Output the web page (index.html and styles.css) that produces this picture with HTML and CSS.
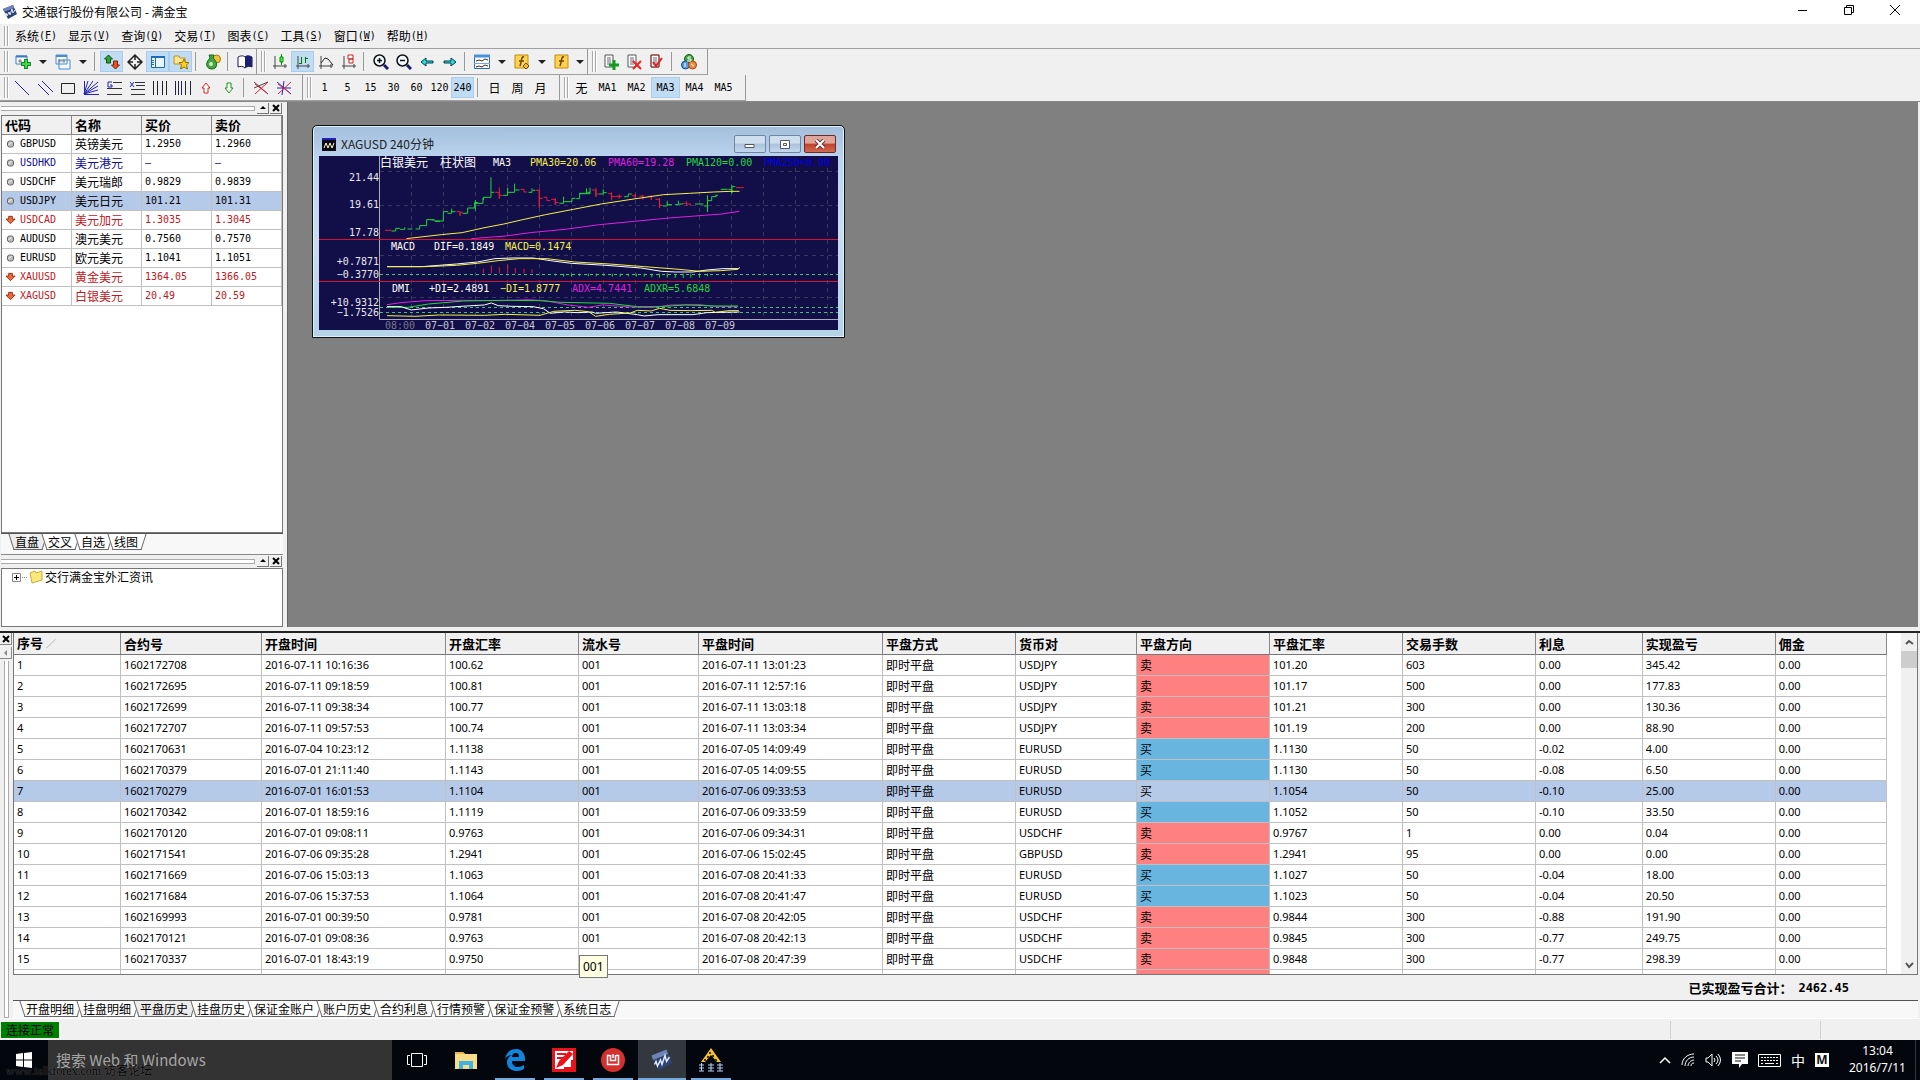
FILE: index.html
```html
<!DOCTYPE html>
<html lang="zh-CN">
<head>
<meta charset="utf-8">
<title>交通银行股份有限公司 - 满金宝</title>
<link rel="stylesheet" href="styles.css">
</head>
<body>
<svg class="defs" width="0" height="0" aria-hidden="true">
  <symbol id="app" viewBox="0 0 16 16"><path d="M1 5l10-4 4 9-9 5z" fill="#2c4273"/><path d="M1 5l10-4 1 3-10 4z" fill="#6e84b4"/><path d="M3 11l1-2 1 3 2-4 1 3 2-6 1 4 2-3" fill="none" stroke="#dfe8fa"/></symbol>
  <symbol id="dot" viewBox="0 0 8 8"><rect x="1" y="1" width="6" height="6" rx="2" fill="#bbb" stroke="#666"/><path d="M2 5l3-3" stroke="#fff"/></symbol>
  <symbol id="fall" viewBox="0 0 12 10"><path d="M4 1h4v3h3L6 9 1 4h3z" fill="#f26a35" stroke="#8c2a10"/></symbol>
  <symbol id="axes" viewBox="0 0 16 16"><path d="M3 2v13M1 12h14M13 10v4" fill="none" stroke="#444"/></symbol>
  <symbol id="page" viewBox="0 0 16 16"><path d="M2 1h8v12H2z" fill="#fff" stroke="#555"/><path d="M4 4h4M4 6h4M4 8h4M4 10h4" stroke="#667"/></symbol>
  <symbol id="func" viewBox="0 0 16 16"><path d="M1 1h13v13H1z" fill="#ffd34d" stroke="#c08a10"/><path d="M10 3c-3-1-2 4-4 9M5 7h5" fill="none" stroke="#70460c" stroke-width="1.5"/></symbol>
</svg>

<header class="titlebar">
  <svg width="16" height="16"><use href="#app"/></svg>
  <h1>交通银行股份有限公司 - 满金宝</h1>
  <div class="winctl">
    <button aria-label="最小化"><svg width="10" height="10"><path d="M0 5.500h9" stroke="#000"/></svg></button>
    <button aria-label="还原"><svg width="10" height="10" fill="none" stroke="#000"><path d="M.5 2.500h7v7h-7zM2.500 2V.5h7v7H8"/></svg></button>
    <button aria-label="关闭"><svg width="10" height="10" stroke="#000"><path d="M0 0l10 10M10 0L0 10"/></svg></button>
  </div>
</header>

<nav class="menubar">
  <i class="grip"></i>
  <button>系统<span>(<u>F</u>)</span></button><button>显示<span>(<u>V</u>)</span></button><button>查询<span>(<u>Q</u>)</span></button><button>交易<span>(<u>T</u>)</span></button><button>图表<span>(<u>C</u>)</span></button><button>工具<span>(<u>S</u>)</span></button><button>窗口<span>(<u>W</u>)</span></button><button>帮助<span>(<u>H</u>)</span></button>
</nav>

<div class="toolrow">
  <div class="toolbar">
    <i class="grip"></i>
    <button aria-label="新建图表"><svg viewBox="0 0 16 16"><path d="M1 2h11v8H1z" fill="#fff" stroke="#3c78c8"/><path d="M1 2.500h11" stroke="#3c78c8" stroke-width="2"/><path d="M3 7h4M5 5v4" stroke="#678"/><path d="M11 5v10M6 10h10" stroke="#128a20" stroke-width="4"/><path d="M11 6v8M7 10h8" stroke="#43d84b" stroke-width="2"/></svg></button>
    <button class="drop" aria-label="更多"></button>
    <button aria-label="窗口"><svg viewBox="0 0 16 16"><path d="M4 6h11v9H4zM1 1h11v9H1z" fill="#f2f9ff" stroke="#4d8bd0"/><path d="M1 2h11" stroke="#4d8bd0" stroke-width="2"/><path d="M3 7h7M4 5v4M9 5v4" stroke="#789"/></svg></button>
    <button class="drop" aria-label="更多"></button>
    <i class="sep"></i>
    <button class="on" aria-label="报价"><svg viewBox="0 0 16 16"><path d="M4.500 1l4 4h-2v4h-4V5h-2z" fill="#27a530" stroke="#0c5012"/><path d="M9.500 7h4v4h2l-4 4-4-4h2z" fill="#e8521f" stroke="#7c200b"/></svg></button>
    <button aria-label="十字光标"><svg viewBox="0 0 16 16" fill="none" stroke="#222"><path d="M8 1v5M8 10v5M1 8h5M10 8h5M8 1l7 7-7 7-7-7z" stroke-width="1.500"/></svg></button>
    <button class="on" aria-label="数据窗口"><svg viewBox="0 0 16 16"><path d="M1.500 2.500h13v11h-13z" fill="#eaf6ff" stroke="#1c69b5"/><path d="M1 3h14" stroke="#1c69b5" stroke-width="2"/><path d="M5.500 4v9M2 6.500h2M2 8.500h2M2 10.500h2" stroke="#1c69b5"/></svg></button>
    <button class="on" aria-label="收藏夹"><svg viewBox="0 0 16 16"><path d="M1 2h5l1 2h5v6H1z" fill="#ffe591" stroke="#b89225"/><path d="M11 5l1.500 3.500H16l-2.500 2.500 1 4-3.500-2-3.500 2 1-4L6 8.500h3.500z" fill="#ffd21f" stroke="#997200"/></svg></button>
    <i class="sep"></i>
    <button aria-label="交易"><svg viewBox="0 0 16 16"><circle cx="11.500" cy="5" r="4" fill="#f1c62c" stroke="#a87808"/><path d="M4 1h5L8 4c6 5 4 11-1 11S-1 10 5 4z" fill="#44a544" stroke="#1c681f"/><circle cx="6" cy="10" r="2" fill="#c9efbb"/></svg></button>
    <i class="sep"></i>
    <button aria-label="帮助"><svg viewBox="0 0 16 16"><path d="M8 3C6 1 3 2 1 3v10c2-1 5-1 7 1 2-2 5-2 7-1V3c-2-1-5-2-7 0z" fill="#fff" stroke="#14144b"/><path d="M8 3c2-2 5-1 7 0v10c-2-1-5-1-7 1z" fill="#1b2070"/></svg></button>
  </div>
  <div class="toolbar">
    <i class="grip"></i>
    <button aria-label="蜡烛图"><svg viewBox="0 0 16 16"><use href="#axes"/><path d="M9.500 0v11" stroke="#090"/><path d="M8 3h3v5H8z" fill="#5d5" stroke="#090"/></svg></button>
    <button class="on" aria-label="柱状图"><svg viewBox="0 0 16 16"><use href="#axes"/><path d="M6.500 3v7M4 9.500h2M10.500 3v6M11 4.500h2" stroke="#070" fill="none"/></svg></button>
    <button aria-label="线图"><svg viewBox="0 0 16 16"><use href="#axes"/><path d="M3 9l4-5 3 1 5 6" stroke="#222" fill="none"/></svg></button>
    <button aria-label="宝塔图"><svg viewBox="0 0 16 16"><use href="#axes"/><path d="M7 1h5v4H7zM8 5h4v4H8z" fill="#fff" stroke="#c22"/></svg></button>
    <i class="sep"></i>
    <button aria-label="放大"><svg viewBox="0 0 16 16"><circle cx="6.500" cy="6.500" r="5.500" fill="#eff9ff" stroke="#111" stroke-width="1.500"/><path d="M4 6.500h5M6.500 4v5" stroke="#111" stroke-width="1.500"/><path d="M11 11l4 4" stroke="#191970" stroke-width="3"/></svg></button>
    <button aria-label="缩小"><svg viewBox="0 0 16 16"><circle cx="6.500" cy="6.500" r="5.500" fill="#eff9ff" stroke="#111" stroke-width="1.500"/><path d="M4 6.500h5" stroke="#111" stroke-width="1.500"/><path d="M11 11l4 4" stroke="#191970" stroke-width="3"/></svg></button>
    <button aria-label="左移"><svg viewBox="0 0 16 16"><path d="M2 8l5-4v3h7v2H7v3z" fill="#24dfe6" stroke="#033c46"/></svg></button>
    <button aria-label="右移"><svg viewBox="0 0 16 16"><path d="M14 8L9 4v3H2v2h7v3z" fill="#24dfe6" stroke="#033c46"/></svg></button>
    <i class="sep"></i>
    <button aria-label="模板"><svg viewBox="0 0 16 16"><path d="M.5 1.500h15v13H.5z" fill="#fff" stroke="#2b6db5"/><path d="M0 2h16" stroke="#478edb" stroke-width="3"/><path d="M0 9.500h16" stroke="#7aa7da"/><path d="M2 7l3-1 3 1 3-2 3 1M2 13l3-1 3 1 3-2 3 1" fill="none" stroke="#333"/></svg></button>
    <button class="drop" aria-label="更多"></button>
    <button aria-label="指标"><svg viewBox="0 0 16 16"><use href="#func"/><path d="M12 9l3 3-3 3-3-3z" fill="#f6bd2a" stroke="#6b4a00"/></svg></button>
    <button class="drop" aria-label="更多"></button>
    <button aria-label="公式"><svg viewBox="0 0 16 16"><use href="#func"/></svg></button>
    <button class="drop last" aria-label="更多"></button>
  </div>
  <div class="toolbar">
    <i class="grip"></i>
    <button aria-label="新建单"><svg viewBox="0 0 16 16"><use href="#page"/><path d="M11 6v10M6 11h10" stroke="#119c20" stroke-width="3"/></svg></button>
    <button aria-label="撤单"><svg viewBox="0 0 16 16"><use href="#page"/><path d="M7 7l8 8M15 7l-8 8" stroke="#e22" stroke-width="2"/></svg></button>
    <button aria-label="确认"><svg viewBox="0 0 16 16"><use href="#page"/><path d="M2 13V1h8v12z" fill="none" stroke="#a33"/><path d="M4 8l3 4 6-8" fill="none" stroke="#d22" stroke-width="2"/></svg></button>
    <i class="sep"></i>
    <button aria-label="资金"><svg viewBox="0 0 16 16"><circle cx="8" cy="5" r="4.500" fill="#3ba33b" stroke="#185c18"/><circle cx="4.500" cy="11" r="4" fill="#5898e0" stroke="#194b90"/><circle cx="11.500" cy="11" r="4" fill="#f08b3d" stroke="#9a4510"/><path d="M10 3H7v2h3v2H6M4 9v4M10 10l3 2" stroke="#fff" fill="none"/></svg></button>
    <i class="gap"></i>
  </div>
</div>

<div class="toolrow second">
  <div class="toolbar">
    <i class="grip"></i>
    <button aria-label="直线"><svg viewBox="0 0 16 16"><path d="M1 1l14 14" stroke="#22b"/></svg></button>
    <button aria-label="平行线"><svg viewBox="0 0 16 16"><path d="M1 4l11 11M5 1l11 11" stroke="#22b"/></svg></button>
    <button aria-label="矩形"><svg viewBox="0 0 16 16"><path d="M1.500 3.500h13v10h-13z" fill="none" stroke="#222"/></svg></button>
    <button aria-label="扇形线"><svg viewBox="0 0 16 16"><path d="M1.500 1v14M1 14.500h15M1 14L5 1M1 14L10 1M1 14L15 2M1 14l14-8M1 14l14-4" stroke="#22b" fill="none"/></svg></button>
    <button aria-label="黄金分割"><svg viewBox="0 0 16 16"><path d="M7 2.500h9M1 8.500h15M1 14.500h15" stroke="#333"/><path d="M6 2H2v5h4V5H4" fill="none" stroke="#22b"/></svg></button>
    <button aria-label="百分比线"><svg viewBox="0 0 16 16"><path d="M6 2.500h10M7 5.500h9M2 9.500h14M2 14.500h14" stroke="#333"/><path d="M1 2l4 5M5 2L1 7" fill="none" stroke="#22b"/></svg></button>
    <button aria-label="周期线"><svg viewBox="0 0 16 16"><path d="M1.500 1v14M5.500 1v14M10.500 1v14M14.500 1v14" stroke="#222"/></svg></button>
    <button aria-label="斐波那契线"><svg viewBox="0 0 16 16"><path d="M.5 1v14M3.500 1v14M6.500 1v14M10.500 1v14M15.500 1v14" stroke="#224"/></svg></button>
    <button aria-label="上箭头"><svg viewBox="0 0 16 16"><path d="M8 3l4 5h-2v5H6V8H4z" fill="#fff" stroke="#d22"/></svg></button>
    <button aria-label="下箭头"><svg viewBox="0 0 16 16"><path d="M8 13L4 8h2V3h4v5h2z" fill="#fff" stroke="#191"/></svg></button>
    <i class="sep"></i>
    <button aria-label="删除"><svg viewBox="0 0 16 16"><path d="M1 2l14 12M1 8l14-6" stroke="#444"/><path d="M15 2L2 14M2 4l12 9" stroke="#d24"/></svg></button>
    <button aria-label="全部删除"><svg viewBox="0 0 16 16"><path d="M1 2l14 12M1 8h14M8 1L6 15" stroke="#22b"/><path d="M15 2L2 14M2 4l12 9" stroke="#d24"/></svg></button>
    <i class="gap"></i>
  </div>
  <div class="toolbar mono">
    <i class="grip"></i>
    <button>1</button><button>5</button><button>15</button><button>30</button><button>60</button><button>120</button><button class="on">240</button>
    <i class="sep"></i>
    <button class="zh">日</button><button class="zh">周</button><button class="zh">月</button>
    <i class="gap"></i>
  </div>
  <div class="toolbar mono">
    <i class="grip"></i>
    <button class="zh">无</button><button class="ma">MA1</button><button class="ma">MA2</button><button class="ma on">MA3</button><button class="ma">MA4</button><button class="ma">MA5</button>
    <i class="gap"></i>
  </div>
</div>

<main class="workspace">
  <aside class="side">
    <section class="quotes">
      <div class="dockbar"><i></i><button aria-label="折叠"><svg width="8" height="8"><path d="M1 5h6L4 2z"/></svg></button><button aria-label="关闭"><svg width="8" height="8"><path d="M1 1l6 6M7 1L1 7" stroke="#000" stroke-width="2"/></svg></button></div>
      <div class="quotebox">
        <table>
          <tr><th>代码</th><th>名称</th><th>买价</th><th>卖价</th></tr>
          <tr><td><svg><use href="#dot"/></svg>GBPUSD</td><td>英镑美元</td><td>1.2950</td><td>1.2960</td></tr>
          <tr class="blue"><td><svg><use href="#dot"/></svg>USDHKD</td><td>美元港元</td><td>–</td><td>–</td></tr>
          <tr><td><svg><use href="#dot"/></svg>USDCHF</td><td>美元瑞郎</td><td>0.9829</td><td>0.9839</td></tr>
          <tr class="sel"><td><svg><use href="#dot"/></svg>USDJPY</td><td>美元日元</td><td>101.21</td><td>101.31</td></tr>
          <tr class="red"><td><svg class="big"><use href="#fall"/></svg>USDCAD</td><td>美元加元</td><td>1.3035</td><td>1.3045</td></tr>
          <tr><td><svg><use href="#dot"/></svg>AUDUSD</td><td>澳元美元</td><td>0.7560</td><td>0.7570</td></tr>
          <tr><td><svg><use href="#dot"/></svg>EURUSD</td><td>欧元美元</td><td>1.1041</td><td>1.1051</td></tr>
          <tr class="red"><td><svg class="big"><use href="#fall"/></svg>XAUUSD</td><td>黄金美元</td><td>1364.05</td><td>1366.05</td></tr>
          <tr class="red"><td><svg class="big"><use href="#fall"/></svg>XAGUSD</td><td>白银美元</td><td>20.49</td><td>20.59</td></tr>
        </table>
      </div>
      <div class="tabs"><button class="cur">直盘</button><button>交叉</button><button>自选</button><button>线图</button></div>
    </section>
    <section class="news">
      <div class="dockbar"><i></i><button aria-label="折叠"><svg width="8" height="8"><path d="M1 5h6L4 2z"/></svg></button><button aria-label="关闭"><svg width="8" height="8"><path d="M1 1l6 6M7 1L1 7" stroke="#000" stroke-width="2"/></svg></button></div>
      <div class="tree">
        <svg width="32" height="16"><path d="M.5 4.500h8v8h-8z" fill="#fff" stroke="#888"/><path d="M2 8.500h5M4.500 6v5" stroke="#000"/><path d="M10 8.500h6" stroke="#888" stroke-dasharray="1 1"/><path d="M18 4l5-2 1 2 6-2v9l-10 3z" fill="#fae87a" stroke="#c8ae3c"/></svg>
        <span>交行满金宝外汇资讯</span>
      </div>
    </section>
  </aside>

  <section class="mdi">
    <article class="chartwin">
      <header>
        <svg width="14" height="13"><path d="M0 0h14v13H0z" fill="#0a0a14"/><path d="M0 0h14v2H0z" fill="#22b"/><path d="M2 10l2-5 2 5 2-5 2 5 2-5" stroke="#ffc" fill="none"/></svg>
        <h2>XAGUSD 240分钟</h2>
        <button aria-label="最小化"><svg width="14" height="10"><path d="M2 5.500h9v3H2z" fill="#fff" stroke="#556"/></svg></button>
        <button aria-label="最大化"><svg width="14" height="10"><path d="M2.500 1.500h9v8h-9zM5.500 4.500h3v2h-3z" fill="#fff" stroke="#556"/></svg></button>
        <button class="close" aria-label="关闭"><svg width="14" height="10"><path d="M3 1l8 8M11 1L3 9" stroke="#633" stroke-width="4"/><path d="M3 1l8 8M11 1L3 9" stroke="#fff" stroke-width="2"/></svg></button>
      </header>
      <svg class="chart" viewBox="0 0 519 174" width="519" height="174">
        <g stroke="#38385c" stroke-dasharray="4 4" fill="none">
          <path d="M61 15.500h458M61 49.500h458M61 99.500h458M61 141.500h458"/>
          <path d="M92.500 12v150M124.500 12v150M156.500 12v150M188.500 12v150M220.500 12v150M252.500 12v150M284.500 12v150M316.500 12v150M348.500 12v150M380.500 12v150M412.500 12v150M444.500 12v150M476.500 12v150M508.500 12v150"/>
        </g>
        <path d="M61 118.500h458M61 151.500h458M61 156.500h458" stroke="#3fc56e" stroke-dasharray="3 3"/>
        <path d="M60.500 0v163.500H519" fill="none" stroke="#aab"/>
        <path d="M0 83.500h519M0 125.500h519" stroke="#d41430"/>
        <g class="plot" transform="translate(-14 -36) scale(.3476 .3333)">
          <path stroke="#1fd83a" d="M249 333h12v-8h12M273 328h14v-6M295 327h14M318 327h12v-10h20v-18h20M364 300h10v4h14M376 303h22v-28h14M410 280h12v-14M421 275h12M454 280h14v-16h20v-16h10M490 272v-32M490 250h22v-16M513 240v-8h22v-60M536 217h8M570 226h13v-22M583 217h20v-26M605 210h12M643 217h10v-12M655 211h8M732 250h12v-20M744 245h24v-10h10M780 236h10v-16h20v-15M790 221h30v-18M812 217h8M846 222h12v-14M858 218h10M918 230h12v-8h10M1030 258h12v-14M1042 254h14M1064 254h10v-12M1074 252h14M1122 252h24M1148 258h10v18v-50M1158 242h12v-12h14M1180 226h8M1196 208h20M1218 208h10v12v-24M1228 200h10"/>
          <path stroke="#e0203a" d="M230 331h18M436 275h10v12v-10h8M547 217h12v19v-34M559 226h10M620 208h10v8h8M664 211h10v52v-58M674 235h10M686 232h10v10h10M708 238h12v16v-20M720 248h10M825 210h12v20v-27M837 222h8M872 221h10v20v-24M882 230h10M892 229h12v6v-12M904 229h8M940 227h10v10v-16M962 228h10v10v-14M972 232h8M986 229h10v10v-14M1008 238h12v26v-30M1020 256h8M1088 250h10v6v-12M1100 252h10v6M1240 203h22"/>
          <path stroke="#f4f04a" d="M292 356l100-12 60-6 60-14 60-12 50-12 70-16 80-16 80-16 100-16 80-12 74-4 70-4 50-2h24"/>
          <path stroke="#df20df" d="M478 356l100-8 70-10 100-10 100-14 100-10 100-10 100-8 52-4 50-8"/>
          <path stroke="#fff" d="M236 440h100l50-4 50-4 60-6 50-10 50-2h60l50 8 60 8 100 6 100 8 60 10 40 2h50l40-6 46-4h46l2-4"/>
          <path stroke="#f4f04a" d="M236 440h110l90-4 60-6 60-8 60-6h80l80 10 100 6 100 8 100 8 60 6 60-2 50-4"/>
          <path stroke="#e0203a" d="M513 460v-14M536 460v-24M559 460v-18M583 460v-26M605 460v-16M630 460v-14M653 460v-12"/>
          <path stroke="#1fd83a" d="M720 461v6M744 461v9M767 461v9M790 461v7M815 461v8M838 461v8M860 461v7M884 461v9M907 461v9M930 461v8M953 461v9M976 461v9M998 461v11M1020 461v12M1042 461v12M1065 461v13M1088 461v13M1110 461v12M1135 461v12M1158 461v8"/>
          <path stroke="#df20df" d="M236 554l40-6 70-6 110-1 110 1 80-3 50 4 60 12 60 7 40-7 80 6 60 2 60-8 80-1 50 6h60"/>
          <path stroke="#1fd83a" d="M236 562h60l60-10 100-9 120-2 100 1 60 5 140 3 80 10h60l80-5 80 3h70"/>
          <path stroke="#fff" d="M236 560h40l30 10 50-6 50-2 60-4 50-3 20-6 20 8 40 2 60 1 30 6 20 14 40-4 40 2 40-2 10 4 60-4 60 8 20 4 40-4h100l40-6 94-2"/>
          <path stroke="#f4f04a" d="M236 587l80 2 70-4 130 1 60-3 100 3 40-12 60-3 40 4 20 14 40-6 60-4 20-8 40 2 24-8 30 6 60 1 60-1 10 6 40-5h28"/>
        </g>
        <g class="mono">
          <text class="zh" x="61" y="11" fill="#fff">白银美元</text><text class="zh" x="121" y="11" fill="#fff">柱状图</text>
          <text x="174" y="10" fill="#fff">MA3</text><text x="211" y="10" fill="#f4f04a">PMA30=20.06</text><text x="289" y="10" fill="#df20df">PMA60=19.28</text><text x="367" y="10" fill="#1fd83a">PMA120=0.00</text><text x="445" y="10" fill="#0000e8">PMA250=0.00</text>
          <g fill="#e8e8f0" text-anchor="end"><text x="60" y="25">21.44</text><text x="60" y="52">19.61</text><text x="60" y="80">17.78</text><text x="60" y="109">+0.7871</text><text x="60" y="122">−0.3770</text><text x="60" y="150">+10.9312</text><text x="60" y="160">−1.7526</text></g>
          <text x="72" y="94" fill="#fff">MACD</text><text x="115" y="94" fill="#fff">DIF=0.1849</text><text x="186" y="94" fill="#f4f04a">MACD=0.1474</text>
          <text x="73" y="136" fill="#fff">DMI</text><text x="110" y="136" fill="#fff">+DI=2.4891</text><text x="181" y="136" fill="#f4f04a">−DI=1.8777</text><text x="253" y="136" fill="#df20df">ADX=4.7441</text><text x="325" y="136" fill="#1fd83a">ADXR=5.6848</text>
          <text x="66" y="173" fill="#77778c">08:00</text>
          <g fill="#c8c8d4"><text x="106" y="173">07−01</text><text x="146" y="173">07−02</text><text x="186" y="173">07−04</text><text x="226" y="173">07−05</text><text x="266" y="173">07−06</text><text x="306" y="173">07−07</text><text x="346" y="173">07−08</text><text x="386" y="173">07−09</text></g>
        </g>
      </svg>
    </article>
  </section>
</main>

<section class="history">
  <div class="strip">
    <button aria-label="关闭"><svg width="8" height="8"><path d="M1 1l6 6M7 1L1 7" stroke="#000" stroke-width="2"/></svg></button>
    <button aria-label="折叠"><svg width="8" height="8"><path d="M5 1v6L2 4z" fill="#888"/></svg></button>
    <i></i>
  </div>
  <div class="pane">
    <div class="tablebox">
      <div class="clip">
      <table>
        <colgroup><col class="w107"><col class="w141"><col class="w184"><col class="w133"><col class="w120"><col class="w184"><col class="w133"><col class="w121"><col class="w133"><col class="w133"><col class="w133"><col class="w107"><col class="w133"><col class="w111"></colgroup>
        <thead><tr><th>序号 <small>∕</small></th><th>合约号</th><th>开盘时间</th><th>开盘汇率</th><th>流水号</th><th>平盘时间</th><th>平盘方式</th><th>货币对</th><th>平盘方向</th><th>平盘汇率</th><th>交易手数</th><th>利息</th><th>实现盈亏</th><th>佣金</th></tr></thead>
        <tbody>
        <tr><td>1</td><td>1602172708</td><td>2016-07-11 10:16:36</td><td>100.62</td><td>001</td><td>2016-07-11 13:01:23</td><td>即时平盘</td><td>USDJPY</td><td class="sell">卖</td><td>101.20</td><td>603</td><td>0.00</td><td>345.42</td><td>0.00</td></tr>
        <tr><td>2</td><td>1602172695</td><td>2016-07-11 09:18:59</td><td>100.81</td><td>001</td><td>2016-07-11 12:57:16</td><td>即时平盘</td><td>USDJPY</td><td class="sell">卖</td><td>101.17</td><td>500</td><td>0.00</td><td>177.83</td><td>0.00</td></tr>
        <tr><td>3</td><td>1602172699</td><td>2016-07-11 09:38:34</td><td>100.77</td><td>001</td><td>2016-07-11 13:03:18</td><td>即时平盘</td><td>USDJPY</td><td class="sell">卖</td><td>101.21</td><td>300</td><td>0.00</td><td>130.36</td><td>0.00</td></tr>
        <tr><td>4</td><td>1602172707</td><td>2016-07-11 09:57:53</td><td>100.74</td><td>001</td><td>2016-07-11 13:03:34</td><td>即时平盘</td><td>USDJPY</td><td class="sell">卖</td><td>101.19</td><td>200</td><td>0.00</td><td>88.90</td><td>0.00</td></tr>
        <tr><td>5</td><td>1602170631</td><td>2016-07-04 10:23:12</td><td>1.1138</td><td>001</td><td>2016-07-05 14:09:49</td><td>即时平盘</td><td>EURUSD</td><td class="buy">买</td><td>1.1130</td><td>50</td><td>-0.02</td><td>4.00</td><td>0.00</td></tr>
        <tr><td>6</td><td>1602170379</td><td>2016-07-01 21:11:40</td><td>1.1143</td><td>001</td><td>2016-07-05 14:09:55</td><td>即时平盘</td><td>EURUSD</td><td class="buy">买</td><td>1.1130</td><td>50</td><td>-0.08</td><td>6.50</td><td>0.00</td></tr>
        <tr class="sel"><td>7</td><td>1602170279</td><td>2016-07-01 16:01:53</td><td>1.1104</td><td>001</td><td>2016-07-06 09:33:53</td><td>即时平盘</td><td>EURUSD</td><td>买</td><td>1.1054</td><td>50</td><td>-0.10</td><td>25.00</td><td>0.00</td></tr>
        <tr><td>8</td><td>1602170342</td><td>2016-07-01 18:59:16</td><td>1.1119</td><td>001</td><td>2016-07-06 09:33:59</td><td>即时平盘</td><td>EURUSD</td><td class="buy">买</td><td>1.1052</td><td>50</td><td>-0.10</td><td>33.50</td><td>0.00</td></tr>
        <tr><td>9</td><td>1602170120</td><td>2016-07-01 09:08:11</td><td>0.9763</td><td>001</td><td>2016-07-06 09:34:31</td><td>即时平盘</td><td>USDCHF</td><td class="sell">卖</td><td>0.9767</td><td>1</td><td>0.00</td><td>0.04</td><td>0.00</td></tr>
        <tr><td>10</td><td>1602171541</td><td>2016-07-06 09:35:28</td><td>1.2941</td><td>001</td><td>2016-07-06 15:02:45</td><td>即时平盘</td><td>GBPUSD</td><td class="sell">卖</td><td>1.2941</td><td>95</td><td>0.00</td><td>0.00</td><td>0.00</td></tr>
        <tr><td>11</td><td>1602171669</td><td>2016-07-06 15:03:13</td><td>1.1063</td><td>001</td><td>2016-07-08 20:41:33</td><td>即时平盘</td><td>EURUSD</td><td class="buy">买</td><td>1.1027</td><td>50</td><td>-0.04</td><td>18.00</td><td>0.00</td></tr>
        <tr><td>12</td><td>1602171684</td><td>2016-07-06 15:37:53</td><td>1.1064</td><td>001</td><td>2016-07-08 20:41:47</td><td>即时平盘</td><td>EURUSD</td><td class="buy">买</td><td>1.1023</td><td>50</td><td>-0.04</td><td>20.50</td><td>0.00</td></tr>
        <tr><td>13</td><td>1602169993</td><td>2016-07-01 00:39:50</td><td>0.9781</td><td>001</td><td>2016-07-08 20:42:05</td><td>即时平盘</td><td>USDCHF</td><td class="sell">卖</td><td>0.9844</td><td>300</td><td>-0.88</td><td>191.90</td><td>0.00</td></tr>
        <tr><td>14</td><td>1602170121</td><td>2016-07-01 09:08:36</td><td>0.9763</td><td>001</td><td>2016-07-08 20:42:13</td><td>即时平盘</td><td>USDCHF</td><td class="sell">卖</td><td>0.9845</td><td>300</td><td>-0.77</td><td>249.75</td><td>0.00</td></tr>
        <tr><td>15</td><td>1602170337</td><td>2016-07-01 18:43:19</td><td>0.9750</td><td>001</td><td>2016-07-08 20:47:39</td><td>即时平盘</td><td>USDCHF</td><td class="sell">卖</td><td>0.9848</td><td>300</td><td>-0.77</td><td>298.39</td><td>0.00</td></tr>
        <tr><td></td><td></td><td></td><td></td><td></td><td></td><td></td><td></td><td class="sell"></td><td></td><td></td><td></td><td></td><td></td></tr>
        </tbody>
      </table>
      </div>
      <div class="scroll">
        <button aria-label="上"><svg width="9" height="7" fill="none" stroke="#555" stroke-width="2"><path d="M1 5l3-3 4 3"/></svg></button>
        <i></i>
        <button class="down" aria-label="下"><svg width="9" height="7" fill="none" stroke="#555" stroke-width="2"><path d="M1 1l3 4 4-4"/></svg></button>
      </div>
    </div>
    <div class="total"><span>已实现盈亏合计：</span><b class="mono">2462.45</b></div>
    <div class="tabs wide"><button>开盘明细</button><button>挂盘明细</button><button class="cur">平盘历史</button><button>挂盘历史</button><button>保证金账户</button><button>账户历史</button><button>合约利息</button><button>行情预警</button><button>保证金预警</button><button>系统日志</button></div>
  </div>
  <div class="tooltip" role="tooltip">001</div>
</section>

<footer class="status"><span>连接正常</span><i></i><i></i></footer>

<div class="taskbar">
  <button class="start" aria-label="开始"><svg width="16" height="16" fill="#fff"><path d="M0 2l7-1v6.500H0zM8 1l8-1v7.500H8zM0 8.500h7V15l-7-1zM8 8.500h8V16l-8-1z"/></svg></button>
  <input type="text" aria-label="搜索" placeholder="搜索 Web 和 Windows">
  <button aria-label="任务视图"><svg width="20" height="16" fill="none" stroke="#fff"><path d="M4.500 1.500h11v13h-11zM3 3.500H.5v9H3M17 3.500h2.500v9H17"/></svg></button>
  <button aria-label="文件资源管理器"><svg width="22" height="20"><path d="M0 2h8l2 2h12v15H0z" fill="#f9dc85"/><path d="M0 2h8l2 2h-10z" fill="#e8b94a"/><path d="M4 19v-8h14v8h-4v-4H8v4z" fill="#3fb3e4"/></svg></button>
  <button class="run" aria-label="Edge"><svg width="22" height="22" viewBox="0 0 22 22"><path d="M1 10C2 3 7 0 12 0c6 0 9 5 9 10v2H8c0 4 3 6 6 6 2 0 4-1 6-2v4c-2 1-4 2-7 2-6 0-10-3-10-9 0-3 2-6 5-7-5 0-7 4-7 4zm7-2h7c0-3-1-4-3-4-3 0-4 2-4 4z" fill="#1184dc"/></svg></button>
  <button class="run" aria-label="行情软件"><svg width="24" height="24"><path d="M0 0h24v24H0z" fill="#e8131b"/><path d="M3 3h18v18H3z" fill="#fff"/><path d="M5 6h9M5 10h6M20 12v8h-8" stroke="#e8131b" stroke-width="2" fill="none"/><path d="M4 20l3-7L17 3l4 3-10 11z" fill="#e8131b"/></svg></button>
  <button class="run" aria-label="网银"><svg width="24" height="24" fill="none"><circle cx="12" cy="12" r="12" fill="#d5302f"/><path d="M9 7.500H6.500v9h11v-9H15M9.500 7v5.500h5V7M12 6v4" stroke="#fff" stroke-width="1.500"/></svg></button>
  <button class="run active" aria-label="满金宝"><svg width="24" height="24"><use href="#app"/></svg></button>
  <button class="run" aria-label="鑫金宝"><svg width="24" height="24"><path d="M12 0L2 14h4l6-7 6 7h4z" fill="#f4bf2e"/><path d="M10 5h2M13 8h2M8 9h2M5 12h2M16 12h2" stroke="#431" stroke-width="2"/><path d="M0 17h5M2.500 15v8M0 20h5M0 23h5M9 17h6M12 15v8M9 20h6M9 23h6M18 17h6M21 15v8M18 20h6M18 23h6" stroke="#bcd1f4"/></svg></button>
  <div class="tray">
    <svg width="12" height="8" fill="none" stroke="#fff" stroke-width="1.500"><path d="M1 7l5-5 5 5"/></svg>
    <svg width="14" height="14" fill="none" stroke="#fff"><path d="M1 12C1 6 6 1 13 1M4 13c0-5 4-9 9-9M7 13c0-3 3-6 6-6M10 13c0-2 1-3 3-3"/></svg>
    <svg width="17" height="14" fill="none" stroke="#fff"><path d="M1 5h2l4-4v12L3 9H1zM9 5q2 2 0 4M11 3q4 4 0 8M13 1q5 6 0 12"/></svg>
    <svg width="16" height="16"><path d="M0 0h16v12H10l-3 4v-4H0z" fill="#fff"/><path d="M3 3h10M3 6h10M3 9h6" stroke="#111"/></svg>
    <svg width="23" height="13" fill="none" stroke="#fff"><path d="M.5.5h22v12H.5z"/><path d="M3 3.500h17M3 6.500h17" stroke-dasharray="2 1"/><path d="M3 9.500h2M7 9.500h9M18 9.500h2"/></svg>
    <span>中</span>
    <b>M</b>
  </div>
  <time>13:04<br>2016/7/11</time>
  <span class="mark">www.talkforex.com 访客论坛</span>
</div>
</body>
</html>
```
FILE: styles.css
```css
* { box-sizing: border-box; }
body {
  margin: 0; height: 100vh; overflow: hidden; display: flex; flex-direction: column;
  background: #f0f0f0; color: #000;
  font: 12px/16px "Noto Sans CJK SC", sans-serif;
}
button { font: inherit; color: inherit; background: none; border: 0; padding: 0; margin: 0; display: inline-flex; align-items: center; justify-content: center; white-space: nowrap; }
table { border-collapse: separate; border-spacing: 0; table-layout: fixed; }
.defs { position: absolute; }
.mono { font-family: "DejaVu Sans Mono", monospace; font-size: 10px; }
.zh { font-family: "Noto Sans CJK SC", sans-serif; font-size: 12px; }

.titlebar { display: flex; align-items: center; gap: 4px; height: 24px; flex: none; background: #fff; padding: 0 2px; }
.titlebar h1 { font: inherit; margin: 0; flex: 1; }
.winctl { display: flex; align-self: flex-start; }
.winctl button { width: 46px; height: 20px; }

.menubar { display: flex; height: 25px; flex: none; align-items: center; border-bottom: 1px solid #a0a0a0; }
.menubar .grip { margin-right: 4px; }
.menubar button { padding-right: 11px; }
.menubar span { font: 10px/16px "DejaVu Sans Mono", monospace; }
.grip { width: 11px; flex: none; align-self: stretch; margin: 2px 0; background: linear-gradient(90deg, transparent 4px, #aaa 4px 5px, #fff 5px 6px, transparent 6px 7px, #aaa 7px 8px, #fff 8px 9px, transparent 9px); }

.toolrow { display: flex; height: 26px; flex: none; }
.toolbar { display: flex; align-items: center; border-right: 1px solid #999; border-bottom: 1px solid #a0a0a0; }
.toolbar button { width: 23px; height: 21px; }
.toolbar button svg { width: 16px; height: 16px; }
.toolbar .ma { width: 29px; }
.toolbar .on { background: #c0dcf3; box-shadow: inset 0 0 0 1px #a8cdee; }
.toolbar .drop { width: 17px; }
.toolbar .last { width: 14px; }
.drop::after { content: ""; border: 4px solid transparent; border-top-color: #222; border-bottom: 0; }
.second .grip { width: 10px; }
.sep { width: 9px; height: 19px; background: linear-gradient(90deg, transparent 3px, #999 3px 4px, transparent 4px); }
.gap { width: 7px; }

.workspace { display: grid; grid-template-columns: 287px 1fr; flex: 1; min-height: 0; padding-right: 2px; border-top: 1px solid #888; }
.side { display: flex; flex-direction: column; min-height: 0; padding: 0 4px 0 1px; }
.quotes { flex: 1; display: flex; flex-direction: column; min-height: 0; }
.dockbar { display: flex; align-items: center; height: 13px; flex: none; }
.dockbar i { flex: 1; height: 5px; border: 1px solid #aaa; border-left: 0; background: #fff; margin-right: 2px; }
.dockbar button { width: 12px; height: 11px; margin-right: 1px; border-right: 1px solid #777; border-bottom: 1px solid #777; background: #f0f0f0; }
.quotebox { flex: 1; background: #fff; border: 1px solid #777; overflow: hidden; }
.quotebox table { width: 100%; }
.quotebox th { height: 19px; padding: 0 3px; text-align: left; font-size: 13px; line-height: 16px; background: #f0f0f0; border-right: 1px solid #888; border-bottom: 1px solid #888; }
.quotebox td { height: 19px; padding: 0 3px; border-right: 1px solid #c0c0c0; border-bottom: 1px solid #c0c0c0; white-space: nowrap; line-height: 16px; font-family: "DejaVu Sans Mono", "Noto Sans CJK SC", monospace; font-size: 10px; }
.quotebox td:nth-child(2) { font-size: 12px; font-family: "Noto Sans CJK SC", sans-serif; }
.quotebox td svg { width: 11px; height: 8px; margin-right: 4px; vertical-align: middle; }
.quotebox td .big { height: 10px; }
.blue { color: #101094; }
.red { color: #c01822; }
.sel { background: #b5c9e8; }

.tabs { display: flex; height: 21px; flex: none; padding-left: 10px; background: #f8f8f8; border-top: 1px solid #555; }
.tabs button { position: relative; z-index: 0; height: 16px; padding: 0 5px 0 4px; }
.tabs button::before, .tabs button::after { content: ""; position: absolute; z-index: -1; top: 0; bottom: 0; background: #fff; border-bottom: 1px solid #666; }
.tabs button::before { left: 0; right: 50%; border-left: 1px solid #666; transform: skewX(18deg); }
.tabs button::after { left: 50%; right: 0; border-right: 1px solid #666; transform: skewX(-18deg); }
.tabs .cur::before, .tabs .cur::after { background: #ececec; }

.news { height: 73px; flex: none; display: flex; flex-direction: column; border-top: 1px solid #888; }
.tree { flex: 1; display: flex; align-items: flex-start; gap: 1px; padding: 0 10px; background: #fff; border: 1px solid #777; }

.mdi { position: relative; background: #808080; border-left: 1px solid #666; overflow: hidden; }
.chartwin { position: absolute; left: 24px; top: 23px; border: 1px solid #111; border-radius: 5px 5px 0 0; padding: 0 6px 7px; background: linear-gradient(#a3bedb, #b9d3ee 30px, #c9dcf0 50%, #b4d2e8); box-shadow: inset 0 0 0 1px #dff1fc; }
.chartwin header { display: flex; align-items: center; height: 30px; padding: 6px 2px 0 3px; gap: 3px; }
.chartwin h2 { flex: 1; margin: 0 0 0 2px; font: 12px/16px "Noto Sans CJK SC", sans-serif; color: #222; }
.chartwin header button { width: 32px; height: 18px; border: 1px solid #6e86a2; border-radius: 2px; background: linear-gradient(#cfdeee 45%, #a9c1da 50%, #c4d8ec); }
.chartwin header .close { background: linear-gradient(#dfa49a 45%, #c4402e 50%, #d06a50); border-color: #6b2c26; }
.chart { display: block; background: #120e48; }
.plot path { fill: none; stroke-width: 1px; vector-effect: non-scaling-stroke; }

.history { position: relative; display: flex; height: 391px; flex: none; padding-right: 2px; }
.history::before { content: ""; position: absolute; left: 0; right: 0; top: 4px; border-top: 2px solid #222; }
.strip { width: 13px; flex: none; display: flex; flex-direction: column; gap: 2px; padding-top: 6px; }
.strip button { width: 12px; height: 12px; border-right: 1px solid #888; border-bottom: 1px solid #888; }
.strip i { flex: 1; margin-left: 4px; width: 5px; border: 1px solid #aaa; border-top: 0; background: #fff; }
.pane { flex: 1; min-width: 0; display: flex; flex-direction: column; padding-top: 6px; }
.tablebox { display: flex; flex: 1; min-height: 0; background: #fff; border: 1px solid #777; border-top: 0; }
.clip { flex: 1; min-width: 0; overflow: hidden; }
.clip table { width: calc(100% - 14px); }
.w107 { width: 5.71%; } .w111 { width: 5.93%; } .w120 { width: 6.41%; } .w121 { width: 6.46%; }
.w133 { width: 7.1%; } .w141 { width: 7.53%; } .w184 { width: 9.82%; }
.clip th { height: 22px; padding: 0 3px; text-align: left; font-size: 13px; line-height: 16px; background: #f0f0f0; border-right: 1px solid #888; border-bottom: 1px solid #777; }
.clip th small { font-size: 10px; font-weight: 400; color: #888; }
.clip td { height: 21px; padding: 0 3px; border-right: 1px solid #c0c0c0; border-bottom: 1px solid #c0c0c0; font: 11px/16px "Noto Sans", sans-serif; white-space: nowrap; }
.clip td:nth-child(7), .clip td:nth-child(9) { font: 12px/16px "Noto Sans CJK SC", sans-serif; }
.clip .sell { background: #ff8080; }
.clip .buy { background: #68b5e0; }
.scroll { width: 16px; display: flex; flex-direction: column; background: #f0f0f0; }
.scroll button { height: 18px; }
.scroll i { height: 17px; background: #cdcdcd; }
.scroll .down { margin-top: auto; }
.total { display: flex; align-items: center; justify-content: flex-end; gap: 6px; height: 25px; flex: none; padding-right: 69px; font-weight: 700; font-size: 13px; }
.total .mono { font-size: 12px; }
.tabs.wide { height: 18px; padding-left: 9px; }
.tooltip { position: absolute; left: 579px; bottom: 40px; height: 23px; padding: 2px 3px; border: 1px solid #777; background: #ffffe1; font: 12px/17px "Noto Sans", sans-serif; }

.status { display: flex; align-items: center; height: 22px; flex: none; border-top: 1px solid #fff; }
.status span { margin: 0 auto 0 1px; padding: 0 5px; background: #008000; }
.status i { height: 18px; width: 150px; border-left: 1px solid #d0d0d0; }
.status i:last-child { width: 100px; }

.taskbar { position: relative; display: flex; height: 40px; flex: none; background: #03060c; color: #fff; padding-right: 4px; }
.taskbar > button { width: 48px; margin-right: 1px; }
.taskbar .start { margin: 0; }
.taskbar input { width: 344px; border: 0; margin: 0 1px 0 0; padding: 0 8px; background: #333; color: #fff; font: 15px/20px "Noto Sans CJK SC", sans-serif; }
.taskbar input::placeholder { color: #a6a6a6; opacity: 1; }
.taskbar .run { background: linear-gradient(#76a9dc, #76a9dc) center bottom / 40px 2px no-repeat; }
.taskbar .active { background-color: #33373e; background-size: 48px 2px; }
.tray { display: flex; align-items: center; gap: 10px; margin-left: auto; }
.tray span { font-size: 14px; }
.tray b { width: 14px; height: 14px; background: #fff; color: #111; font: 700 12px/14px "Noto Sans", sans-serif; text-align: center; }
.taskbar time { width: 87px; padding: 2px 0 0 11px; text-align: center; line-height: 17px; font-family: "Noto Sans", sans-serif; border-right: 1px solid #333; }
.mark { position: absolute; left: 6px; bottom: 1px; font: 12px/16px "Liberation Serif", "Noto Sans CJK SC", serif; color: #000; text-shadow: 0 0 1px #777; }
```
